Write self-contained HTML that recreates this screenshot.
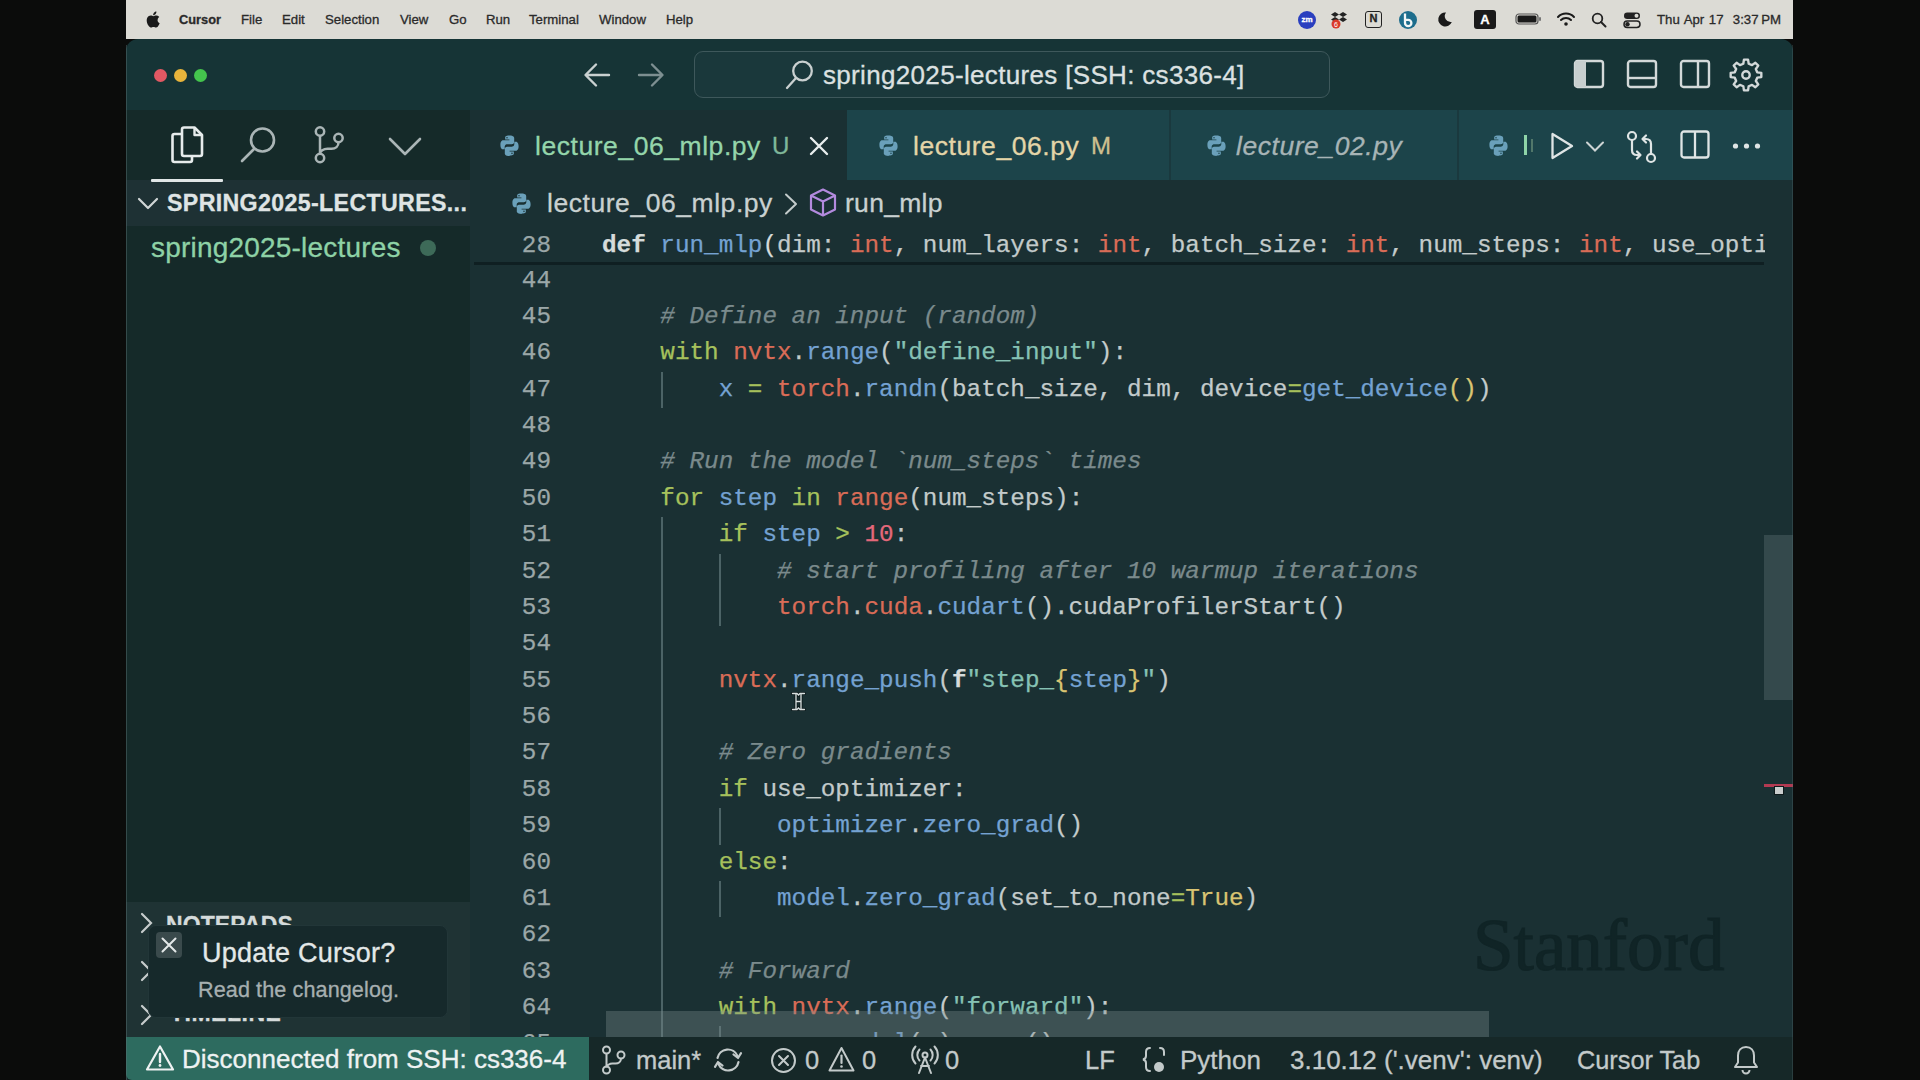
<!DOCTYPE html>
<html><head><meta charset="utf-8">
<style>
*{margin:0;padding:0;box-sizing:border-box}
html,body{width:1920px;height:1080px;overflow:hidden;background:#0b0c0b;font-family:"Liberation Sans",sans-serif;position:relative}
.a{position:absolute;white-space:nowrap;-webkit-text-stroke:0.3px currentColor}
.code{-webkit-text-stroke:0.25px currentColor}
svg{position:absolute;overflow:visible}
#menubar{left:126px;top:0;width:1667px;height:39px;background:#dcdbd5}
.mi{position:absolute;top:12px;font-size:13.2px;color:#2a2a2a;line-height:15px}
#win{left:126px;top:39px;width:1667px;height:1041px;background:#163436;border-top-left-radius:12px;border-top-right-radius:12px;overflow:hidden}
.code{font-family:"Liberation Mono",monospace;font-size:24.3px;line-height:36px;white-space:pre}
.ln{position:absolute;left:396px;width:155px;text-align:right;color:#9ba7a8}
.cl{position:absolute;left:602px;color:#c3cbcb}
.k{color:#a6c15c}   /* keyword with/for/in/if/else */
.o{color:#d96c57}   /* module/builtin orange */
.b{color:#74a2d2}   /* function blue */
.s{color:#86c2b4}   /* string */
.c{color:#7a8a8c;font-style:italic}
.n{color:#e3687a}   /* number */
.y{color:#d9c472}   /* yellow */
.w{color:#d5dbdb}
</style></head>
<body>
<!-- MENU BAR -->
<div id="menubar" class="a">
  <svg style="left:20px;top:11px" width="14" height="17" viewBox="0 0 14 17"><path d="M11.6 9.1c0-2 1.6-2.9 1.7-3-1-1.4-2.4-1.6-2.9-1.6-1.2-.1-2.4.7-3 .7-.6 0-1.6-.7-2.6-.7C3.4 4.5 2.1 5.3 1.4 6.600 0 9 1 12.600 2.400 14.600c.7 1 1.500 2.100 2.500 2 1-.0 1.400-.6 2.600-.6 1.200 0 1.500.6 2.600.6 1.100 0 1.800-1 2.400-2 .8-1.100 1.100-2.200 1.100-2.300 0 0-2.100-.8-2.100-3.200zM9.600 3.100c.5-.7.9-1.600.8-2.600-.8 0-1.800.5-2.400 1.200-.5.6-1 1.600-.8 2.500.9.1 1.800-.4 2.400-1.100z" fill="#1a1a1a"/></svg>
  <div class="mi" style="left:53px;font-weight:700;font-size:12.8px">Cursor</div>
  <div class="mi" style="left:115px">File</div>
  <div class="mi" style="left:156px">Edit</div>
  <div class="mi" style="left:199px">Selection</div>
  <div class="mi" style="left:274px">View</div>
  <div class="mi" style="left:323px">Go</div>
  <div class="mi" style="left:360px">Run</div>
  <div class="mi" style="left:403px">Terminal</div>
  <div class="mi" style="left:473px">Window</div>
  <div class="mi" style="left:540px">Help</div>
  <!-- status icons -->
  <div class="a" style="left:1172px;top:11px;width:18px;height:18px;border-radius:50%;background:#2a3fbf;color:#fff;font-size:8px;font-weight:700;text-align:center;line-height:18px">zm</div>
  <svg style="left:1203px;top:10px" width="20" height="20" viewBox="0 0 20 20"><path d="M6 2l4 2.5-4 2.5-4-2.5zM14 2l4 2.5-4 2.5-4-2.5zM6 7l4 2.5-4 2.5-4-2.5zM14 7l4 2.5-4 2.5-4-2.5z" fill="#222"/><circle cx="7" cy="14" r="4.5" fill="#d93a2b"/><text x="7" y="16.5" font-size="7" fill="#fff" text-anchor="middle" font-family="Liberation Sans">6</text></svg>
  <div class="a" style="left:1239px;top:11px;width:17px;height:17px;border:1.8px solid #222;border-radius:3px;font-size:11px;font-weight:700;text-align:center;line-height:13px;color:#222">N</div>
  <svg style="left:1272px;top:10px" width="20" height="20" viewBox="0 0 20 20"><circle cx="10" cy="10" r="9" fill="#1d6d8c"/><path d="M7 3.500v9.500a3.200 3.200 0 1 0 3.200-3.200H7" fill="none" stroke="#f2f6f6" stroke-width="2.300"/></svg>
  <svg style="left:1311px;top:11px" width="16" height="16" viewBox="0 0 16 16"><path d="M9 1.5A7 7 0 1 0 14.800 11 6 6 0 0 1 9 1.500z" fill="#1a1a1a"/></svg>
  <div class="a" style="left:1348px;top:10px;width:22px;height:19px;background:#1a1a1a;border-radius:3px;color:#fff;font-size:13px;font-weight:700;text-align:center;line-height:19px">A</div>
  <svg style="left:1389px;top:12px" width="28" height="14" viewBox="0 0 28 14"><rect x="1" y="2" width="22" height="10" rx="3" fill="none" stroke="#555" stroke-width="1.2"/><rect x="2.500" y="3.500" width="19" height="7" rx="1.500" fill="#1a1a1a"/><rect x="24" y="5" width="2" height="4" rx="1" fill="#777"/></svg>
  <svg style="left:1430px;top:11px" width="20" height="16" viewBox="0 0 20 16"><path d="M2 6a11 11 0 0 1 16 0" fill="none" stroke="#1a1a1a" stroke-width="2" stroke-linecap="round"/><path d="M5 9a7 7 0 0 1 10 0" fill="none" stroke="#1a1a1a" stroke-width="2" stroke-linecap="round"/><circle cx="10" cy="13" r="1.800" fill="#1a1a1a"/></svg>
  <svg style="left:1465px;top:12px" width="16" height="16" viewBox="0 0 16 16"><circle cx="6.500" cy="6.500" r="4.800" fill="none" stroke="#222" stroke-width="1.800"/><path d="M10 10l4.500 4.500" stroke="#222" stroke-width="2" stroke-linecap="round"/></svg>
  <svg style="left:1497px;top:11px" width="18" height="18" viewBox="0 0 18 18"><rect x="1" y="1.500" width="16" height="6.500" rx="3.200" fill="#222"/><circle cx="13.500" cy="4.750" r="2" fill="#dcdbd5"/><rect x="1" y="10" width="16" height="6.500" rx="3.200" fill="none" stroke="#222" stroke-width="1.500"/><circle cx="4.500" cy="13.250" r="2.200" fill="#222"/></svg>
  <div class="mi" style="left:1531px;font-size:13.200px;word-spacing:1px">Thu Apr 17&nbsp; 3:37&#8239;PM</div>
</div>

<!-- WINDOW -->
<div id="win" class="a"></div>

<!-- traffic lights -->
<div class="a" style="left:154px;top:69px;width:13px;height:13px;border-radius:50%;background:#e25863"></div>
<div class="a" style="left:174px;top:69px;width:13px;height:13px;border-radius:50%;background:#e8b43b"></div>
<div class="a" style="left:194px;top:69px;width:13px;height:13px;border-radius:50%;background:#44c44d"></div>

<!-- nav arrows -->
<svg style="left:583px;top:62px" width="28" height="26" viewBox="0 0 28 26"><path d="M26 13H3M13 2.500L2.500 13 13 23.500" fill="none" stroke="#c9d0d0" stroke-width="2.400" stroke-linecap="round" stroke-linejoin="round"/></svg>
<svg style="left:637px;top:62px" width="28" height="26" viewBox="0 0 28 26"><path d="M2 13h23M15 2.500L25.500 13 15 23.500" fill="none" stroke="#7d8f91" stroke-width="2.400" stroke-linecap="round" stroke-linejoin="round"/></svg>

<!-- search box -->
<div class="a" style="left:694px;top:51px;width:636px;height:47px;border:1.500px solid #3e585b;border-radius:9px;background:#1a383b"></div>
<svg style="left:785px;top:60px" width="30" height="30" viewBox="0 0 30 30"><circle cx="17.500" cy="11" r="9.300" fill="none" stroke="#c9d0d0" stroke-width="2.300"/><path d="M11 18L2 28" stroke="#c9d0d0" stroke-width="2.300" stroke-linecap="round"/></svg>
<div class="a" style="left:823px;top:61px;font-size:26px;letter-spacing:0.33px;color:#dce1e1;line-height:28px">spring2025-lectures [SSH: cs336-4]</div>

<!-- title right icons -->
<svg style="left:1573px;top:59px" width="32" height="30" viewBox="0 0 32 30"><rect x="2" y="2" width="28" height="26" rx="2.500" fill="none" stroke="#d3d9d9" stroke-width="2.400"/><rect x="2" y="2" width="11" height="26" fill="#c8cfcf"/></svg>
<svg style="left:1626px;top:59px" width="32" height="30" viewBox="0 0 32 30"><rect x="2" y="2" width="28" height="26" rx="2.500" fill="none" stroke="#d3d9d9" stroke-width="2.400"/><path d="M2 19h28" stroke="#d3d9d9" stroke-width="2.400"/></svg>
<svg style="left:1679px;top:59px" width="32" height="30" viewBox="0 0 32 30"><rect x="2" y="2" width="28" height="26" rx="2.500" fill="none" stroke="#d3d9d9" stroke-width="2.400"/><path d="M19 2v26" stroke="#d3d9d9" stroke-width="2.400"/></svg>
<svg style="left:1729px;top:58px" width="34" height="34" viewBox="0 0 33 33"><path d="M27.39 13.89 L31.37 14.50 L31.37 18.50 L27.39 19.11 L26.05 22.35 L28.42 25.60 L25.60 28.42 L22.35 26.05 L19.11 27.39 L18.50 31.37 L14.50 31.37 L13.89 27.39 L10.65 26.05 L7.40 28.42 L4.58 25.60 L6.95 22.35 L5.61 19.11 L1.63 18.50 L1.63 14.50 L5.61 13.89 L6.95 10.65 L4.58 7.40 L7.40 4.58 L10.65 6.95 L13.89 5.61 L14.50 1.63 L18.50 1.63 L19.11 5.61 L22.35 6.95 L25.60 4.58 L28.42 7.40 L26.05 10.65Z" fill="none" stroke="#d3d9d9" stroke-width="2.300" stroke-linejoin="round"/><circle cx="16.5" cy="16.5" r="3.600" fill="none" stroke="#d3d9d9" stroke-width="2.300"/></svg>

<!-- SIDEBAR -->
<div class="a" style="left:126px;top:110px;width:344px;height:928px;background:#152a29"></div>
<div class="a" style="left:126px;top:180px;width:344px;height:46px;background:#1e3134"></div>
<div class="a" style="left:126px;top:902px;width:344px;height:136px;background:#1f3334"></div>
<!-- activity icons -->
<svg style="left:168px;top:125px" width="38" height="40" viewBox="0 0 38 40"><path d="M14 9H6.500a2 2 0 0 0-2 2v24a2 2 0 0 0 2 2H22a2 2 0 0 0 2-2v-4" fill="none" stroke="#e6ebeb" stroke-width="2.600" stroke-linejoin="round"/><path d="M14 4.500a2 2 0 0 1 2-2h10.500l7.500 7.500V29a2 2 0 0 1-2 2H16a2 2 0 0 1-2-2z" fill="none" stroke="#e6ebeb" stroke-width="2.600" stroke-linejoin="round"/><path d="M26.500 2.500V10h7.500" fill="none" stroke="#e6ebeb" stroke-width="2.400" stroke-linejoin="round"/></svg>
<svg style="left:239px;top:125px" width="40" height="40" viewBox="0 0 40 40"><circle cx="23.500" cy="15" r="11.500" fill="none" stroke="#aab5b6" stroke-width="2.600"/><path d="M15 24L3 36" stroke="#aab5b6" stroke-width="2.600" stroke-linecap="round"/></svg>
<svg style="left:312px;top:125px" width="34" height="40" viewBox="0 0 34 40"><circle cx="8" cy="6.500" r="4.200" fill="none" stroke="#aab5b6" stroke-width="2.500"/><circle cx="8" cy="33" r="4.200" fill="none" stroke="#aab5b6" stroke-width="2.500"/><circle cx="26.500" cy="13" r="4.200" fill="none" stroke="#aab5b6" stroke-width="2.500"/><path d="M8 10.700v18.100M26.500 17.200c0 4-3 6.500-7 6.500h-4c-4 0-7.500 2.500-7.500 5" fill="none" stroke="#aab5b6" stroke-width="2.500"/></svg>
<svg style="left:388px;top:136px" width="34" height="22" viewBox="0 0 34 22"><path d="M2 3l15 15L32 3" fill="none" stroke="#aab5b6" stroke-width="2.600" stroke-linecap="round" stroke-linejoin="round"/></svg>
<div class="a" style="left:151px;top:179px;width:72px;height:3px;background:#e0e6e6;border-radius:1px"></div>
<!-- explorer header -->
<svg style="left:137px;top:196px" width="22" height="16" viewBox="0 0 22 16"><path d="M2 3l9 9 9-9" fill="none" stroke="#d0d6d6" stroke-width="2.200" stroke-linecap="round" stroke-linejoin="round"/></svg>
<div class="a" style="left:167px;top:191px;font-size:23.200px;font-weight:700;color:#dfe4e4;line-height:24px;letter-spacing:0.35px">SPRING2025-LECTURES...</div>
<div class="a" style="left:151px;top:233px;font-size:28px;color:#8ed2a6;line-height:30px;letter-spacing:0.2px">spring2025-lectures</div>
<div class="a" style="left:420px;top:240px;width:16px;height:16px;border-radius:50%;background:#3d6a58"></div>
<!-- lower sidebar sections -->
<svg style="left:139px;top:912px" width="16" height="22" viewBox="0 0 16 22"><path d="M3 2l9 9-9 9" fill="none" stroke="#c6cccc" stroke-width="2.200" stroke-linecap="round"/></svg>
<div class="a" style="left:166px;top:913px;font-size:23px;font-weight:700;color:#d5dbdb;line-height:24px;letter-spacing:0.1px">NOTEPADS</div>
<svg style="left:139px;top:960px" width="16" height="22" viewBox="0 0 16 22"><path d="M3 2l9 9-9 9" fill="none" stroke="#c6cccc" stroke-width="2.200" stroke-linecap="round"/></svg>
<svg style="left:139px;top:1004px" width="16" height="22" viewBox="0 0 16 22"><path d="M3 2l9 9-9 9" fill="none" stroke="#c6cccc" stroke-width="2.200" stroke-linecap="round"/></svg>
<div class="a" style="left:170px;top:1001px;font-size:23px;font-weight:700;color:#d5dbdb;line-height:24px;letter-spacing:0.5px">TIMELINE</div>

<!-- EDITOR -->
<div class="a" style="left:470px;top:110px;width:1323px;height:928px;background:#1a3033"></div>
<!-- tab bar -->
<div class="a" style="left:470px;top:110px;width:1323px;height:70px;background:#1c444a"></div>
<div class="a" style="left:470px;top:110px;width:377px;height:72px;background:#1a3033"></div>
<div class="a" style="left:1169px;top:110px;width:1.500px;height:70px;background:#1a393e"></div>
<div class="a" style="left:1457px;top:110px;width:1.500px;height:70px;background:#1a393e"></div>

<!-- python icon template via symbol -->
<svg width="0" height="0" style="position:absolute"><defs>
<symbol id="py" viewBox="0 0 24 24"><path d="M11.800 1.500c-4.600 0-4.300 2-4.300 2v2.200h4.400v.7H5.700S2.500 6 2.500 11.100s2.800 4.900 2.800 4.900h1.700v-2.400s-.1-2.800 2.800-2.800h4.400s2.700 0 2.700-2.600V4.300S17.300 1.500 11.800 1.500zM9.400 3c.4 0 .8.400.8.800s-.4.800-.8.800-.8-.4-.8-.8.4-.8.8-.8z" fill="#6aa0ba"/><path d="M12.200 22.500c4.600 0 4.300-2 4.300-2v-2.200h-4.400v-.7h6.200s3.200.4 3.200-4.700-2.800-4.900-2.800-4.900H17v2.400s.1 2.800-2.800 2.800H9.800s-2.700 0-2.700 2.600v4.400s-.4 2.800 5.100 2.800zm2.400-1.500c-.4 0-.8-.4-.8-.8s.4-.8.8-.8.8.4.8.8-.4.8-.8.8z" fill="#6aa0ba"/></symbol>
</defs></svg>

<svg style="left:498px;top:134px" width="23" height="23"><use href="#py"/></svg>
<div class="a" style="left:535px;top:131px;font-size:26.500px;letter-spacing:0.55px;color:#94d5ab;line-height:30px">lecture_06_mlp.py</div>
<div class="a" style="left:772px;top:131px;font-size:24px;color:#7fb79a;line-height:30px">U</div>
<svg style="left:808px;top:135px" width="22" height="22" viewBox="0 0 22 22"><path d="M3 3l16 16M19 3L3 19" stroke="#e8eded" stroke-width="2.400" stroke-linecap="round"/></svg>

<svg style="left:877px;top:134px" width="23" height="23"><use href="#py"/></svg>
<div class="a" style="left:913px;top:131px;font-size:26.500px;letter-spacing:0.55px;color:#e3d5a8;line-height:30px">lecture_06.py</div>
<div class="a" style="left:1091px;top:131px;font-size:24px;color:#cdbf8f;line-height:30px">M</div>

<svg style="left:1205px;top:134px" width="23" height="23"><use href="#py"/></svg>
<div class="a" style="left:1236px;top:131px;font-size:26.500px;letter-spacing:0.55px;color:#a7b4b6;line-height:30px;font-style:italic">lecture_02.py</div>

<svg style="left:1487px;top:134px" width="23" height="23"><use href="#py"/></svg>
<div class="a" style="left:1524px;top:135px;width:3px;height:20px;background:#8fd4a8"></div>
<div class="a" style="left:1531px;top:139px;width:2px;height:13px;background:#51776a"></div>

<svg style="left:1549px;top:131px" width="28" height="30" viewBox="0 0 28 30"><path d="M3.500 3v24L23 15z" fill="none" stroke="#dfe5e5" stroke-width="2.300" stroke-linejoin="round"/></svg>
<svg style="left:1585px;top:140px" width="20" height="13" viewBox="0 0 20 13"><path d="M2 2.500l8 8 8-8" fill="none" stroke="#cdd4d4" stroke-width="2" stroke-linecap="round"/></svg>
<svg style="left:1625px;top:130px" width="34" height="34" viewBox="0 0 34 34"><circle cx="7" cy="6" r="4" fill="none" stroke="#dfe5e5" stroke-width="2.200"/><circle cx="26" cy="28" r="4" fill="none" stroke="#dfe5e5" stroke-width="2.200"/><path d="M7 10v10c0 3 2 5 5 5h3M12 21.500l3.500 3.500-3.500 3.500M26 24V14c0-3-2-5-5-5h-3M21 5.500L17.500 9l3.500 3.500" fill="none" stroke="#dfe5e5" stroke-width="2.200" stroke-linecap="round" stroke-linejoin="round"/></svg>
<svg style="left:1679px;top:129px" width="32" height="32" viewBox="0 0 32 32"><rect x="2.500" y="2.500" width="27" height="26" rx="2.500" fill="none" stroke="#dfe5e5" stroke-width="2.300"/><path d="M16 2.500v26" stroke="#dfe5e5" stroke-width="2.300"/></svg>
<svg style="left:1730px;top:140px" width="34" height="12" viewBox="0 0 34 12"><circle cx="5.500" cy="6" r="2.600" fill="#dfe5e5"/><circle cx="16.500" cy="6" r="2.600" fill="#dfe5e5"/><circle cx="27.500" cy="6" r="2.600" fill="#dfe5e5"/></svg>

<!-- breadcrumbs -->
<svg style="left:510px;top:192px" width="23" height="23"><use href="#py"/></svg>
<div class="a" style="left:547px;top:188px;font-size:26.500px;letter-spacing:0.55px;color:#c9d1d1;line-height:30px">lecture_06_mlp.py</div>
<svg style="left:783px;top:192px" width="16" height="24" viewBox="0 0 16 24"><path d="M3 2.500l10 9.500-10 9.500" fill="none" stroke="#c3cbcb" stroke-width="2" stroke-linecap="round" stroke-linejoin="round"/></svg>
<svg style="left:808px;top:187px" width="30" height="31" viewBox="0 0 30 31"><path d="M15 2.500L27 8.500v14L15 28.500 3 22.500v-14z M3 8.500l12 6 12-6 M15 14.500v14" fill="none" stroke="#b38ade" stroke-width="2.200" stroke-linejoin="round"/></svg>
<div class="a" style="left:845px;top:188px;font-size:26.500px;letter-spacing:0.3px;color:#c9d1d1;line-height:30px">run_mlp</div>

<!-- sticky scroll line 28 -->
<div class="a" style="left:470px;top:226px;width:1295px;height:37px;background:#1a3033;overflow:hidden">
  <div class="code ln" style="left:-74px;top:2px">28</div>
  <div class="code cl" style="left:132px;top:2px"><b class="w" style="font-weight:700">def</b> <span class="b">run_mlp</span><span class="w">(</span>dim: <span class="o">int</span>, num_layers: <span class="o">int</span>, batch_size: <span class="o">int</span>, num_steps: <span class="o">int</span>, use_opti</div>
</div>
<div class="a" style="left:474px;top:262px;width:1290px;height:3px;background:#0f1f22"></div>

<!--CODE-->
<div class="a" style="left:470px;top:265px;width:1295px;height:773px;overflow:hidden">
<div class="code ln" style="left:-74px;top:-2.40px">44</div>
<div class="code ln" style="left:-74px;top:33.97px">45</div>
<div class="code cl" style="left:132px;top:33.97px">    <span class="c"># Define an input (random)</span></div>
<div class="code ln" style="left:-74px;top:70.34px">46</div>
<div class="code cl" style="left:132px;top:70.34px">    <span class="k">with</span> <span class="o">nvtx</span>.<span class="b">range</span>(<span class="s">"define_input"</span>):</div>
<div class="code ln" style="left:-74px;top:106.71px">47</div>
<div class="code cl" style="left:132px;top:106.71px">        <span class="b">x</span> <span class="k">=</span> <span class="o">torch</span>.<span class="b">randn</span>(batch_size, dim, device<span class="k">=</span><span class="b">get_device</span><span class="y">()</span>)</div>
<div class="code ln" style="left:-74px;top:143.08px">48</div>
<div class="code ln" style="left:-74px;top:179.45px">49</div>
<div class="code cl" style="left:132px;top:179.45px">    <span class="c"># Run the model `num_steps` times</span></div>
<div class="code ln" style="left:-74px;top:215.82px">50</div>
<div class="code cl" style="left:132px;top:215.82px">    <span class="k">for</span> <span class="b">step</span> <span class="k">in</span> <span class="o">range</span>(num_steps):</div>
<div class="code ln" style="left:-74px;top:252.19px">51</div>
<div class="code cl" style="left:132px;top:252.19px">        <span class="k">if</span> <span class="b">step</span> <span class="k">&gt;</span> <span class="n">10</span>:</div>
<div class="code ln" style="left:-74px;top:288.56px">52</div>
<div class="code cl" style="left:132px;top:288.56px">            <span class="c"># start profiling after 10 warmup iterations</span></div>
<div class="code ln" style="left:-74px;top:324.93px">53</div>
<div class="code cl" style="left:132px;top:324.93px">            <span class="o">torch</span>.<span class="o">cuda</span>.<span class="b">cudart</span>().cudaProfilerStart()</div>
<div class="code ln" style="left:-74px;top:361.30px">54</div>
<div class="code ln" style="left:-74px;top:397.67px">55</div>
<div class="code cl" style="left:132px;top:397.67px">        <span class="o">nvtx</span>.<span class="b">range_push</span>(<span class="w" style="font-weight:700">f</span><span class="s">"step_</span><span class="y">{</span><span class="b">step</span><span class="y">}</span><span class="s">"</span>)</div>
<div class="code ln" style="left:-74px;top:434.04px">56</div>
<div class="code ln" style="left:-74px;top:470.41px">57</div>
<div class="code cl" style="left:132px;top:470.41px">        <span class="c"># Zero gradients</span></div>
<div class="code ln" style="left:-74px;top:506.78px">58</div>
<div class="code cl" style="left:132px;top:506.78px">        <span class="k">if</span> use_optimizer:</div>
<div class="code ln" style="left:-74px;top:543.15px">59</div>
<div class="code cl" style="left:132px;top:543.15px">            <span class="b">optimizer</span>.<span class="b">zero_grad</span>()</div>
<div class="code ln" style="left:-74px;top:579.52px">60</div>
<div class="code cl" style="left:132px;top:579.52px">        <span class="k">else</span>:</div>
<div class="code ln" style="left:-74px;top:615.89px">61</div>
<div class="code cl" style="left:132px;top:615.89px">            <span class="b">model</span>.<span class="b">zero_grad</span>(set_to_none<span class="k">=</span><span class="y">True</span>)</div>
<div class="code ln" style="left:-74px;top:652.26px">62</div>
<div class="code ln" style="left:-74px;top:688.63px">63</div>
<div class="code cl" style="left:132px;top:688.63px">        <span class="c"># Forward</span></div>
<div class="code ln" style="left:-74px;top:725.00px">64</div>
<div class="code cl" style="left:132px;top:725.00px">        <span class="k">with</span> <span class="o">nvtx</span>.<span class="b">range</span>(<span class="s">"forward"</span>):</div>
<div class="code ln" style="left:-74px;top:761.37px">65</div>
<div class="code cl" style="left:132px;top:761.37px">            <span class="b">y</span> <span class="k">=</span> <span class="b">model</span>(<span class="b">x</span>).<span class="b">mean</span>()</div>
<div class="a" style="left:191px;top:106.71px;width:2px;height:36.37px;background:#4c6366"></div>
<div class="a" style="left:191px;top:252.19px;width:2px;height:545.55px;background:#4c6366"></div>
<div class="a" style="left:249px;top:288.56px;width:2px;height:72.74px;background:#4c6366"></div>
<div class="a" style="left:249px;top:543.15px;width:2px;height:36.37px;background:#4c6366"></div>
<div class="a" style="left:249px;top:615.89px;width:2px;height:36.37px;background:#4c6366"></div>
<div class="a" style="left:249px;top:761.37px;width:2px;height:36.37px;background:#4c6366"></div>
</div>
<!--/CODE-->
<!-- scrollbars -->
<div class="a" style="left:1764px;top:535px;width:29px;height:165px;background:#34494c"></div>
<div class="a" style="left:1764px;top:784px;width:29px;height:2.5px;background:#b23a52"></div>
<div class="a" style="left:1774px;top:786px;width:10px;height:9px;background:#c9cdcd;border:1px solid #0f1a1c"></div>
<div class="a" style="left:606px;top:1011px;width:883px;height:26px;background:rgba(125,140,142,0.36)"></div>

<!-- Stanford watermark -->
<div class="a" style="left:1473px;top:906px;font-family:'Liberation Serif',serif;font-size:73px;color:#102426;line-height:80px;-webkit-text-stroke:1.2px #102426;letter-spacing:0px">Stanford</div>

<!-- text cursor (I-beam) -->
<svg style="left:791px;top:692px" width="16" height="20" viewBox="0 0 16 20"><path d="M1.500 1.500h4.500l1.500 1.500 1.500-1.500h4.500M5 2v15M10 2v15M1.500 17.500h4.500l1.500-1.500 1.500 1.500h4.500M5 9.500h5" fill="none" stroke="#0d1a1c" stroke-width="3.200" stroke-linecap="round"/><path d="M1.500 1.500h4.500l1.500 1.500 1.500-1.500h4.500M5 2v15M10 2v15M1.500 17.500h4.500l1.500-1.500 1.500 1.500h4.500M5 9.500h5" fill="none" stroke="#d9e0e0" stroke-width="1.300" stroke-linecap="round"/></svg>

<!-- toast -->
<div class="a" style="left:148px;top:925px;width:300px;height:93px;background:#16292b;border-radius:8px;border:1px solid #223638"></div>
<div class="a" style="left:156px;top:932px;width:26px;height:26px;background:#3a4a4c;border-radius:4px"></div>
<svg style="left:159px;top:935px" width="20" height="20" viewBox="0 0 20 20"><path d="M3.500 3.500l13 13M16.500 3.500l-13 13" stroke="#e3e8e8" stroke-width="2" stroke-linecap="round"/></svg>
<div class="a" style="left:202px;top:938px;font-size:27px;color:#e3e8e8;line-height:30px;letter-spacing:0.2px">Update Cursor?</div>
<div class="a" style="left:198px;top:977px;font-size:21.600px;color:#a6afb0;line-height:26px;letter-spacing:0.1px">Read the changelog.</div>

<!-- STATUS BAR -->
<div class="a" style="left:126px;top:1037px;width:1667px;height:43px;background:#162828"></div>
<div class="a" style="left:126px;top:1037px;width:463px;height:43px;background:#2d6b5f;border-bottom-left-radius:6px"></div>
<svg style="left:146px;top:1044px" width="30" height="28" viewBox="0 0 30 28"><path d="M14 2.500L27 25.500H1z" fill="none" stroke="#eef2f2" stroke-width="2.200" stroke-linejoin="round"/><path d="M14 10v8" stroke="#eef2f2" stroke-width="2.400" stroke-linecap="round"/><circle cx="14" cy="21.500" r="1.400" fill="#eef2f2"/></svg>
<div class="a" style="left:182px;top:1044px;font-size:26px;color:#eef2f2;line-height:30px">Disconnected from SSH: cs336-4</div>

<svg style="left:601px;top:1045px" width="26" height="30" viewBox="0 0 26 30"><circle cx="5.500" cy="5" r="3.500" fill="none" stroke="#c3caca" stroke-width="2"/><circle cx="5.500" cy="25" r="3.500" fill="none" stroke="#c3caca" stroke-width="2"/><circle cx="20" cy="10" r="3.500" fill="none" stroke="#c3caca" stroke-width="2"/><path d="M5.500 8.500v13M20 13.500c0 3-2.500 5-5.500 5h-3c-3 0-6 2-6 4" fill="none" stroke="#c3caca" stroke-width="2"/></svg>
<div class="a" style="left:636px;top:1045px;font-size:25.500px;color:#c3caca;line-height:30px">main*</div>
<svg style="left:712px;top:1045px" width="32" height="30" viewBox="0 0 32 30"><path d="M5.500 13A10.500 10.500 0 0 1 25.500 11" fill="none" stroke="#c3caca" stroke-width="2.200" stroke-linecap="round"/><path d="M21.500 9.500l4.500 3.500 3-4.800" fill="none" stroke="#c3caca" stroke-width="2.200" stroke-linecap="round" stroke-linejoin="round"/><path d="M26.500 17A10.500 10.500 0 0 1 6.500 19" fill="none" stroke="#c3caca" stroke-width="2.200" stroke-linecap="round"/><path d="M10.500 20.500L6 17l-3 4.800" fill="none" stroke="#c3caca" stroke-width="2.200" stroke-linecap="round" stroke-linejoin="round"/></svg>
<svg style="left:770px;top:1047px" width="27" height="27" viewBox="0 0 27 27"><circle cx="13.500" cy="13.500" r="11.500" fill="none" stroke="#c3caca" stroke-width="2"/><path d="M9 9l9 9M18 9l-9 9" stroke="#c3caca" stroke-width="2" stroke-linecap="round"/></svg>
<div class="a" style="left:805px;top:1045px;font-size:25.500px;color:#c3caca;line-height:30px">0</div>
<svg style="left:828px;top:1046px" width="27" height="27" viewBox="0 0 27 27"><path d="M13.500 2L25.500 24.500h-24z" fill="none" stroke="#c3caca" stroke-width="2" stroke-linejoin="round"/><path d="M13.500 9.500v7.500" stroke="#c3caca" stroke-width="2.200" stroke-linecap="round"/><circle cx="13.500" cy="20.500" r="1.300" fill="#c3caca"/></svg>
<div class="a" style="left:862px;top:1045px;font-size:25.500px;color:#c3caca;line-height:30px">0</div>
<svg style="left:910px;top:1045px" width="30" height="30" viewBox="0 0 30 30"><circle cx="15" cy="10" r="2.500" fill="none" stroke="#c3caca" stroke-width="2"/><path d="M15 12.500L9 28M15 12.500L21 28M11 21h8" fill="none" stroke="#c3caca" stroke-width="2" stroke-linecap="round"/><path d="M9.500 4.500a8 8 0 0 0 0 11M20.500 4.500a8 8 0 0 1 0 11M5.500 1.500a12.500 12.500 0 0 0 0 17M24.500 1.500a12.500 12.500 0 0 1 0 17" fill="none" stroke="#c3caca" stroke-width="2" stroke-linecap="round"/></svg>
<div class="a" style="left:945px;top:1045px;font-size:25.500px;color:#c3caca;line-height:30px">0</div>
<div class="a" style="left:1085px;top:1045px;font-size:25.500px;color:#c3caca;line-height:30px">LF</div>
<svg style="left:1141px;top:1045px" width="30" height="30" viewBox="0 0 30 30"><path d="M9 3c-3 0-4 1.500-4 4v4c0 2-1 3-3 3.500 2 .5 3 1.500 3 3.500v4c0 2.500 1 4 4 4M19 3c3 0 4 1.500 4 4v3" fill="none" stroke="#c3caca" stroke-width="2" stroke-linecap="round"/><circle cx="18" cy="22" r="5" fill="#c3caca"/></svg>
<div class="a" style="left:1180px;top:1045px;font-size:26px;color:#c3caca;line-height:30px">Python</div>
<div class="a" style="left:1290px;top:1045px;font-size:26px;color:#c3caca;line-height:30px">3.10.12 ('.venv': venv)</div>
<div class="a" style="left:1577px;top:1045px;font-size:25.300px;color:#c3caca;line-height:30px">Cursor Tab</div>
<svg style="left:1731px;top:1044px" width="30" height="32" viewBox="0 0 30 32"><path d="M15 3c-5 0-8 3.500-8 8.500v7L4 23h22l-3-4.500v-7C23 6.500 20 3 15 3z" fill="none" stroke="#c3caca" stroke-width="2" stroke-linejoin="round"/><path d="M11.500 26a3.500 3.500 0 0 0 7 0" fill="none" stroke="#c3caca" stroke-width="2"/></svg>
<div class="a" style="left:126px;top:45px;width:1px;height:1035px;background:rgba(90,115,118,0.45)"></div>
<div class="a" style="left:1792px;top:45px;width:1px;height:1035px;background:rgba(90,115,118,0.3)"></div>
</body></html>
